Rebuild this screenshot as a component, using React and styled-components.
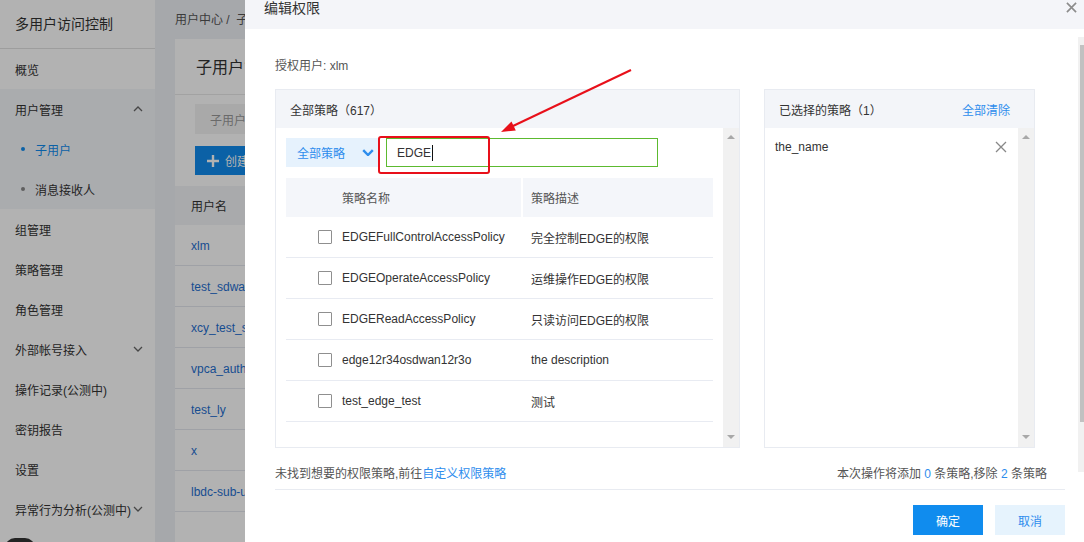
import React from 'react'
import styled, { createGlobalStyle } from 'styled-components'

const GlobalStyle = createGlobalStyle`
  html, body {
    margin: 0;
    padding: 0;
  }
  body {
    font-family: "Liberation Sans", "Noto Sans CJK SC", sans-serif;
    font-size: 12px;
    color: #333;
    background: #eef1f5;
  }
  * {
    box-sizing: border-box;
  }
`

const Page = styled.div`
  position: relative;
  display: flex;
  width: 1084px;
  height: 542px;
  overflow: hidden;
  background: #eef1f5;
`

/* ---------- background page (dimmed) ---------- */

const Sidebar = styled.aside`
  width: 155px;
  flex-shrink: 0;
  background: #fff;
  display: flex;
  flex-direction: column;
`

const SideTitle = styled.div`
  height: 49px;
  padding: 0 0 2px 15px;
  display: flex;
  align-items: center;
  font-size: 14px;
  color: #333;
  border-bottom: 1px solid #e1e1e1;
`

const SideGroup = styled.div`
  background: #f4f6fa;
`

const SideItem = styled.div`
  height: 40px;
  display: flex;
  align-items: center;
  justify-content: space-between;
  padding: 0 12px 0 ${({ $sub }) => ($sub ? '21px' : '15px')};
  color: ${({ $active }) => ($active ? '#108cee' : '#333')};
  white-space: nowrap;
`

const SideLabel = styled.span`
  display: flex;
  align-items: center;
  gap: 10px;
`

const Dot = styled.i`
  width: 4px;
  height: 4px;
  border-radius: 50%;
  background: ${({ $active }) => ($active ? '#108cee' : '#888')};
`

const Main = styled.main`
  flex: 1;
  min-width: 0;
  padding-left: 20px;
  display: flex;
  flex-direction: column;
`

const Crumb = styled.div`
  height: 39px;
  padding-bottom: 3px;
  display: flex;
  align-items: center;
  color: #555;
  white-space: pre;
`

const Card = styled.div`
  flex: 1;
  width: 900px;
  background: #fff;
`

const CardTitle = styled.div`
  height: 56px;
  padding: 0 0 2px 21px;
  display: flex;
  align-items: center;
  font-size: 16px;
  color: #333;
  border-bottom: 1px solid #e8e8e8;
`

const CardTools = styled.div`
  padding: 9px 20px 0;
  display: flex;
  flex-direction: column;
  align-items: flex-start;
  gap: 12px;
`

const SearchBox = styled.div`
  width: 240px;
  height: 30px;
  padding-left: 15px;
  display: flex;
  align-items: center;
  background: #f3f3f3;
  color: #999;
`

const CreateBtn = styled.div`
  height: 29px;
  padding: 0 12px;
  display: flex;
  align-items: center;
  gap: 6px;
  background: #108cee;
  color: #fff;
`

const UserHead = styled.div`
  margin-top: 11px;
  height: 39px;
  padding-left: 16px;
  display: flex;
  align-items: center;
  background: #f2f4f7;
  color: #333;
`

const UserRow = styled.div`
  height: 41px;
  padding: 2px 0 0 16px;
  display: flex;
  align-items: center;
  border-bottom: 1px solid #e4e7ee;
  color: #1f6fd0;
`

const HelpBubble = styled.div`
  position: absolute;
  left: 5px;
  bottom: -22px;
  width: 30px;
  height: 26px;
  border-radius: 10px;
  background: #333;
`

const Dim = styled.div`
  position: absolute;
  inset: 0;
  background: rgba(0, 0, 0, 0.3);
`

/* ---------- drawer ---------- */

const Drawer = styled.section`
  position: absolute;
  top: 0;
  right: 0;
  bottom: 0;
  width: 839px;
  background: #fff;
  display: flex;
  flex-direction: column;
`

const DrawerHead = styled.header`
  height: 29px;
  flex-shrink: 0;
  padding: 0 7px 0 19px;
  display: flex;
  align-items: flex-start;
  justify-content: space-between;
  background: #f4f5f9;
`

const DrawerTitle = styled.h2`
  margin: 0;
  font-size: 14px;
  font-weight: normal;
  line-height: 17px;
  color: #333;
`

const CloseBtn = styled.span`
  margin-top: 2px;
  display: flex;
`

const DrawerBody = styled.div`
  flex: 1;
  display: flex;
`

const DrawerContent = styled.div`
  flex: 1;
  padding: 0 13px 0 30px;
  display: flex;
  flex-direction: column;
`

const PageScroll = styled.div`
  width: 6px;
  height: 435px;
  margin-top: 8px;
  padding-top: 8px;
  background: #f1f1f1;
  display: flex;
  justify-content: flex-end;
`

const PageThumb = styled.div`
  width: 4px;
  height: 377px;
  background: #c1c1c1;
`

const UserLine = styled.div`
  margin-top: 28px;
  line-height: 18px;
  color: #555;
`

const Panels = styled.div`
  margin-top: 14px;
  display: flex;
  gap: 24px;
`

const Panel = styled.div`
  width: ${({ $w }) => $w}px;
  height: 359px;
  border: 1px solid #e8ebf1;
  display: flex;
  flex-direction: column;
`

const PanelHead = styled.div`
  height: 38px;
  flex-shrink: 0;
  padding: 0 ${({ $pr }) => $pr || 16}px 0 14px;
  display: flex;
  align-items: center;
  justify-content: space-between;
  background: #f3f5f9;
  color: #333;
`

const TextLink = styled.span`
  color: #2e8ded;
  cursor: pointer;
`

const PanelBody = styled.div`
  flex: 1;
  display: flex;
  min-height: 0;
`

const PanelMain = styled.div`
  flex: 1;
  padding: ${({ $pad }) => $pad};
  overflow: hidden;
`

const ScrollTrack = styled.div`
  width: 16px;
  flex-shrink: 0;
  padding: 7px 0 8px;
  background: #f1f1f1;
  display: flex;
  flex-direction: column;
  align-items: center;
  justify-content: space-between;
`

const Arrow = styled.i`
  width: 0;
  height: 0;
  border-left: 4px solid transparent;
  border-right: 4px solid transparent;
  ${({ $down }) =>
    $down ? 'border-top: 4px solid #a8a8a8;' : 'border-bottom: 4px solid #a8a8a8;'}
`

const Toolbar = styled.div`
  height: 29px;
  display: flex;
  gap: 8px;
`

const TypeSelect = styled.div`
  width: 92px;
  padding: 0 4px 0 11px;
  display: flex;
  align-items: center;
  justify-content: space-between;
  background: #e6f2fd;
  color: #2e8ded;
`

const SearchInput = styled.div`
  width: 272px;
  padding-left: 10px;
  display: flex;
  align-items: center;
  border: 1px solid #5cba2f;
  color: #333;
`

const Caret = styled.i`
  width: 1px;
  height: 16px;
  margin-left: 1px;
  background: #111;
`

const Grid = styled.div`
  display: grid;
  grid-template-columns: 235px 1fr;
  column-gap: 2px;
  height: ${({ $h }) => $h}px;
  ${({ $line }) => ($line ? 'border-bottom: 1px solid #e8ebf2;' : '')}
`

const PolicyTable = styled.div`
  margin-top: 11px;
`

const HeadCell = styled.div`
  display: flex;
  align-items: center;
  padding-left: ${({ $pl }) => $pl}px;
  background: #f4f6fa;
  color: #555;
`

const Cell = styled.div`
  display: flex;
  align-items: center;
  gap: 10px;
  padding-left: ${({ $pl }) => $pl}px;
  color: #333;
  white-space: nowrap;
`

const Check = styled.i`
  width: 14px;
  height: 14px;
  border: 1px solid #8f8f8f;
  border-radius: 1px;
  background: #fff;
`

const Picked = styled.div`
  height: 38px;
  display: flex;
  align-items: center;
  justify-content: space-between;
  color: #333;
`

const HintRow = styled.div`
  margin-top: 17px;
  padding: 0 18px 6px 0;
  line-height: 18px;
  display: flex;
  justify-content: space-between;
  border-bottom: 1px solid #e8ebf1;
  color: #555;
`

const Num = styled.span`
  color: #2e8ded;
`

const Actions = styled.div`
  padding-top: 15px;
  display: flex;
  justify-content: flex-end;
  gap: 12px;
`

const Button = styled.button`
  width: 70px;
  height: 30px;
  border: none;
  font: inherit;
  font-size: 12px;
  cursor: pointer;
  background: ${({ $primary }) => ($primary ? '#108cee' : '#e6f3fd')};
  color: ${({ $primary }) => ($primary ? '#fff' : '#2e8ded')};
`

const Marks = styled.svg`
  position: absolute;
  left: 0;
  top: 0;
  pointer-events: none;
`

const Chevron = ({ up, color = '#666', w = 10, sw = 1.3 }) => (
  <svg width={w} height={w * 0.6} viewBox="0 0 10 6">
    <polyline
      points={up ? '1,5 5,1 9,5' : '1,1 5,5 9,1'}
      fill="none"
      stroke={color}
      strokeWidth={sw}
    />
  </svg>
)

const Cross = ({ size, color, sw }) => (
  <svg width={size} height={size} viewBox="0 0 12 12">
    <path d="M1 1 L11 11 M11 1 L1 11" stroke={color} strokeWidth={sw} />
  </svg>
)

const menu = [
  { label: '组管理' },
  { label: '策略管理' },
  { label: '角色管理' },
  { label: '外部帐号接入', chevron: true },
  { label: '操作记录(公测中)' },
  { label: '密钥报告' },
  { label: '设置' },
  { label: '异常行为分析(公测中)', chevron: true },
]

const users = ['xlm', 'test_sdwan', 'xcy_test_sub', 'vpca_auth', 'test_ly', 'x', 'lbdc-sub-user']

const policies = [
  ['EDGEFullControlAccessPolicy', '完全控制EDGE的权限'],
  ['EDGEOperateAccessPolicy', '运维操作EDGE的权限'],
  ['EDGEReadAccessPolicy', '只读访问EDGE的权限'],
  ['edge12r34osdwan12r3o', 'the description'],
  ['test_edge_test', '测试'],
]

export default function App() {
  return (
    <Page>
      <GlobalStyle />
      <Sidebar>
        <SideTitle>多用户访问控制</SideTitle>
        <SideItem>概览</SideItem>
        <SideGroup>
          <SideItem>
            用户管理
            <Chevron up />
          </SideItem>
          <SideItem $sub $active>
            <SideLabel>
              <Dot $active />
              子用户
            </SideLabel>
          </SideItem>
          <SideItem $sub>
            <SideLabel>
              <Dot />
              消息接收人
            </SideLabel>
          </SideItem>
        </SideGroup>
        {menu.map((m) => (
          <SideItem key={m.label}>
            {m.label}
            {m.chevron && <Chevron />}
          </SideItem>
        ))}
      </Sidebar>

      <Main>
        <Crumb>{'用户中心 /  子用户'}</Crumb>
        <Card>
          <CardTitle>子用户管理</CardTitle>
          <CardTools>
            <SearchBox>子用户名称</SearchBox>
            <CreateBtn>
              <svg width="12" height="12" viewBox="0 0 12 12">
                <path d="M6 0 V12 M0 6 H12" stroke="#fff" strokeWidth="2.4" />
              </svg>
              创建子用户
            </CreateBtn>
          </CardTools>
          <UserHead>用户名</UserHead>
          {users.map((u) => (
            <UserRow key={u}>{u}</UserRow>
          ))}
        </Card>
      </Main>

      <HelpBubble />
      <Dim />

      <Drawer>
        <DrawerHead>
          <DrawerTitle>编辑权限</DrawerTitle>
          <CloseBtn>
            <Cross size={11} color="#8c8c8c" sw={1.8} />
          </CloseBtn>
        </DrawerHead>
        <DrawerBody>
          <DrawerContent>
            <UserLine>授权用户: xlm</UserLine>
            <Panels>
              <Panel $w={465}>
                <PanelHead>全部策略（617）</PanelHead>
                <PanelBody>
                  <PanelMain $pad="10px 10px 0 10px">
                    <Toolbar>
                      <TypeSelect>
                        全部策略
                        <Chevron color="#2e8ded" w={12} sw={2} />
                      </TypeSelect>
                      <SearchInput>
                        EDGE
                        <Caret />
                      </SearchInput>
                    </Toolbar>
                    <PolicyTable>
                      <Grid $h={39}>
                        <HeadCell $pl={56}>策略名称</HeadCell>
                        <HeadCell $pl={8}>策略描述</HeadCell>
                      </Grid>
                      {policies.map(([name, desc]) => (
                        <Grid key={name} $h={41} $line>
                          <Cell $pl={32}>
                            <Check />
                            {name}
                          </Cell>
                          <Cell $pl={8}>{desc}</Cell>
                        </Grid>
                      ))}
                    </PolicyTable>
                  </PanelMain>
                  <ScrollTrack>
                    <Arrow />
                    <Arrow $down />
                  </ScrollTrack>
                </PanelBody>
              </Panel>

              <Panel $w={271}>
                <PanelHead $pr={24}>
                  <span>已选择的策略（1）</span>
                  <TextLink>全部清除</TextLink>
                </PanelHead>
                <PanelBody>
                  <PanelMain $pad="0 11px 0 10px">
                    <Picked>
                      the_name
                      <Cross size={12} color="#888" sw={1.3} />
                    </Picked>
                  </PanelMain>
                  <ScrollTrack>
                    <Arrow />
                    <Arrow $down />
                  </ScrollTrack>
                </PanelBody>
              </Panel>
            </Panels>

            <HintRow>
              <span>
                未找到想要的权限策略,前往<TextLink>自定义权限策略</TextLink>
              </span>
              <span>
                本次操作将添加 <Num>0</Num> 条策略,移除 <Num>2</Num> 条策略
              </span>
            </HintRow>

            <Actions>
              <Button $primary>确定</Button>
              <Button>取消</Button>
            </Actions>
          </DrawerContent>
          <PageScroll>
            <PageThumb />
          </PageScroll>
        </DrawerBody>

        <Marks width="839" height="542">
          <rect x="134" y="137" width="110" height="36" rx="2" fill="none" stroke="#e8101a" strokeWidth="2" />
          <line x1="386" y1="70" x2="268" y2="126" stroke="#e8101a" strokeWidth="2" />
          <polygon points="256,132 270.8,130.5 266.5,121.5" fill="#e8101a" />
        </Marks>
      </Drawer>
    </Page>
  )
}
